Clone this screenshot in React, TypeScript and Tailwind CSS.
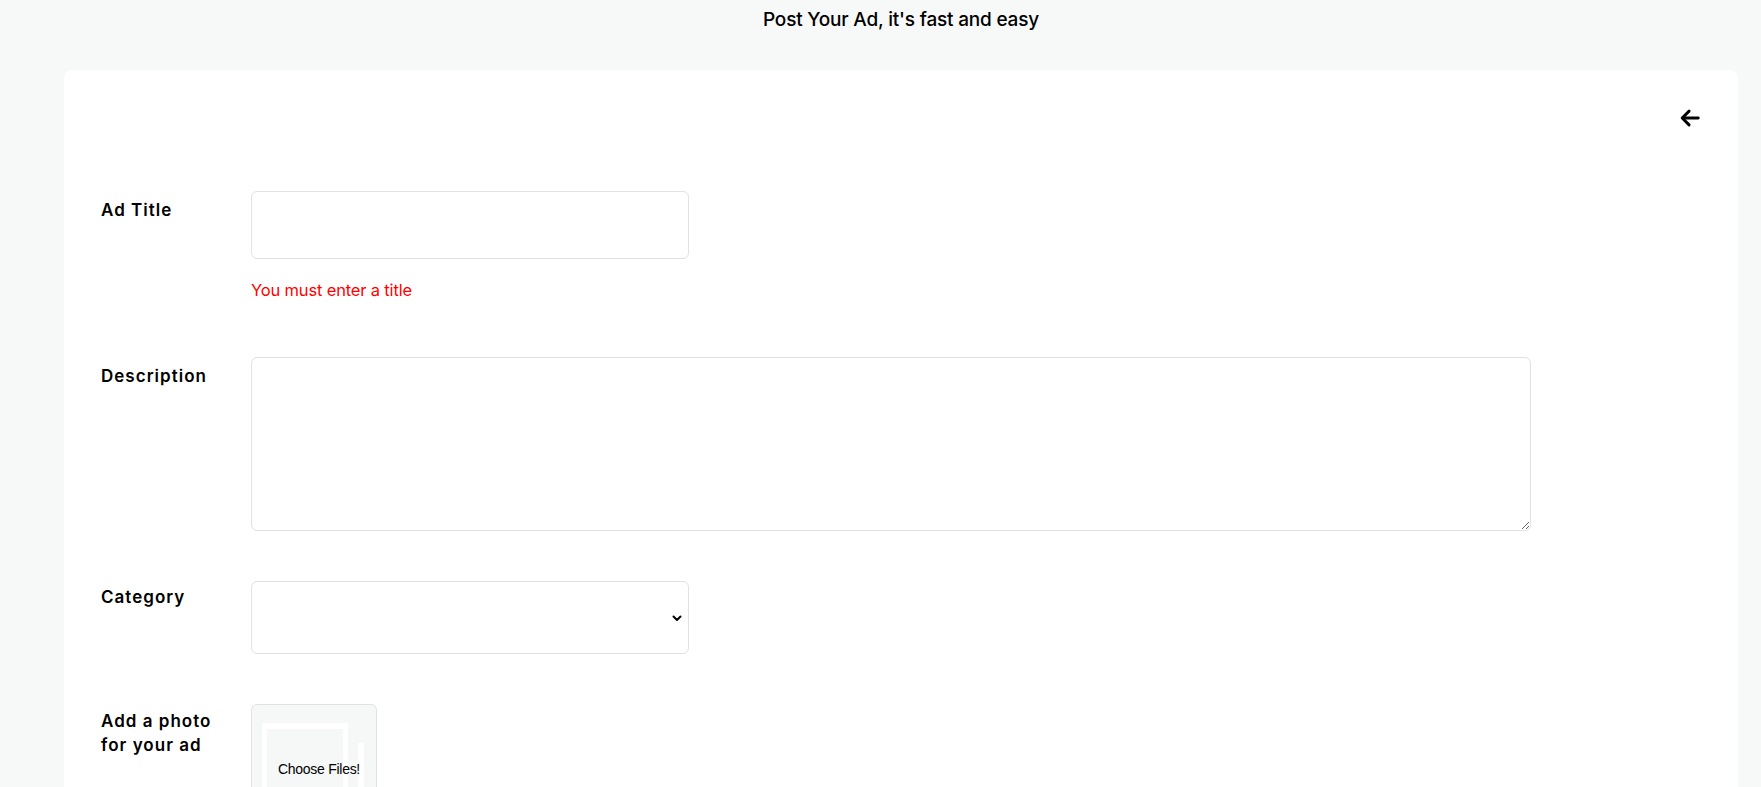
import React from "react";

export default function App() {
  const font = { fontFamily: "Inter, 'Noto Sans', sans-serif" };
  return (
    <div className="min-h-screen bg-[#f7f8f8] text-black" style={font}>
      <div className="pl-[64px] pr-[23px]">
        <h1 className="h-[40px] flex items-center justify-center text-[19px] font-medium tracking-[-0.01em]">
          Post Your Ad, it's fast and easy
        </h1>
        <div className="mt-[30px] bg-white rounded-[8px] pt-[37px] pb-[60px] pl-[37px] pr-[37px]">
          <div className="flex justify-end">
            <svg width="22" height="22" viewBox="0 0 24 24" fill="none" stroke="black" strokeWidth="3.2" strokeLinecap="round" strokeLinejoin="round">
              <path d="M21 12H4.5" />
              <path d="M11 4.5L3.5 12l7.5 7.5" />
            </svg>
          </div>
          <div className="mt-[62px] flex flex-col gap-[50px]">
            <div className="flex">
              <label className="w-[150px] shrink-0 pt-[7px] text-[17px] leading-[24px] font-semibold tracking-[0.06em]">Ad Title</label>
              <div className="pb-[6px]">
                <input type="text" className="block w-[438px] h-[68px] rounded-[6px] border border-[#e2e2e2] bg-white outline-none" />
                <div className="mt-[20px] text-[16.5px] leading-[22px] text-[#ff0000] tracking-[-0.01em]">You must enter a title</div>
              </div>
            </div>
            <div className="flex">
              <label className="w-[150px] shrink-0 pt-[7px] text-[17px] leading-[24px] font-semibold tracking-[0.06em]">Description</label>
              <textarea className="block w-[1280px] h-[174px] rounded-[6px] border border-[#e2e2e2] bg-white outline-none" />
            </div>
            <div className="flex">
              <label className="w-[150px] shrink-0 pt-[4px] text-[17px] leading-[24px] font-semibold tracking-[0.06em]">Category</label>
              <div className="relative w-[438px] h-[73px] rounded-[6px] border border-[#e2e2e2] bg-white">
                <select className="appearance-none w-full h-full bg-transparent outline-none">
                  <option></option>
                </select>
                <svg className="absolute right-[5px] top-[30px] pointer-events-none" width="12" height="12" viewBox="0 0 12 12" fill="none" stroke="black" strokeWidth="2" strokeLinecap="round" strokeLinejoin="round">
                  <path d="M2.5 4.5L6 8l3.5-3.5" />
                </svg>
              </div>
            </div>
            <div className="flex">
              <label className="w-[150px] shrink-0 pt-[5px] text-[17px] leading-[24px] font-semibold tracking-[0.06em]">
                Add a photo
                <br />
                for your ad
              </label>
              <div className="relative w-[126px] h-[126px] rounded-[6px] border border-[#e2e2e2] bg-[#f6f7f7] overflow-hidden">
                <div className="absolute left-[10px] top-[18px] w-[86px] h-[110px] bg-white" />
                <div className="absolute left-[15px] top-[24px] w-[76px] h-[110px] bg-[#f6f7f7]" />
                <div className="absolute left-[106px] top-[38px] w-[6px] h-[90px] bg-white" />
                <div className="absolute inset-x-0 top-[54px] pl-[10px] text-center text-[14px] leading-[20px] tracking-[-0.02em]" style={{ fontFamily: "'Liberation Sans', Arial, sans-serif" }}>
                  Choose Files!
                </div>
                <input type="file" multiple className="absolute inset-0 opacity-0 cursor-pointer" />
              </div>
            </div>
          </div>
        </div>
      </div>
    </div>
  );
}
